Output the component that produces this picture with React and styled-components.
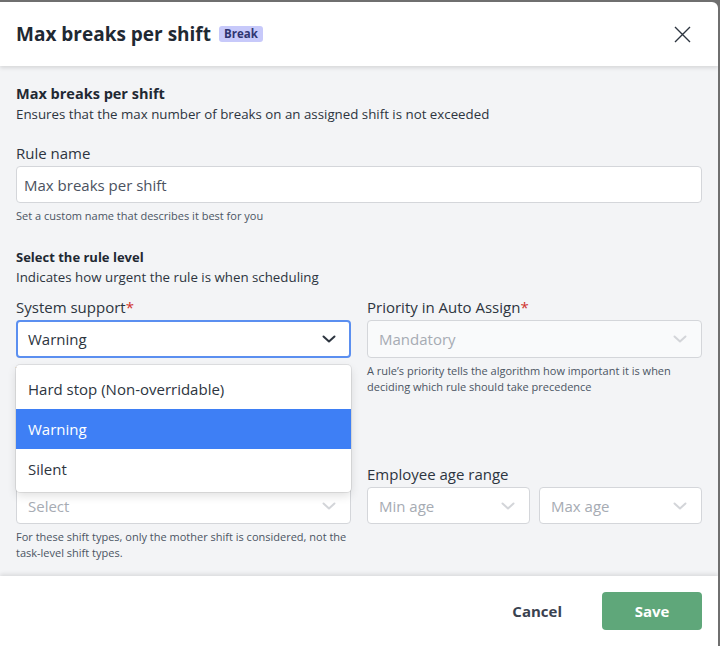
import React from 'react'
import styled, { createGlobalStyle } from 'styled-components'

const GlobalStyle = createGlobalStyle`
  html, body {
    margin: 0;
    padding: 0;
    background: #6f6f6f;
    font-family: "Open Sans", Lato, sans-serif;
    color: #1f2937;
    overflow: hidden;
  }
  * {
    box-sizing: border-box;
  }
`

const Modal = styled.div`
  margin-top: 2px;
  width: 718px;
  height: 644px;
  background: #fff;
  border-top-right-radius: 6px;
  display: flex;
  flex-direction: column;
  overflow: hidden;
`

const Header = styled.header`
  height: 64px;
  flex-shrink: 0;
  display: flex;
  align-items: center;
  padding: 0 27px 0 16px;
  position: relative;
  z-index: 2;
  box-shadow: 0 2px 4px rgba(0, 0, 0, 0.12);
`

const Title = styled.h1`
  margin: 0;
  font-size: 19px;
  font-weight: 700;
  color: #1f2933;
`

const Badge = styled.span`
  margin-left: 8px;
  background: #c7c9fa;
  color: #2f3571;
  font-size: 11.5px;
  font-weight: 700;
  padding: 1px 5px;
  border-radius: 3px;
  line-height: 14px;
`

const CloseButton = styled.button`
  margin-left: auto;
  border: none;
  background: none;
  padding: 0;
  display: flex;
  cursor: pointer;
`

const Body = styled.main`
  flex: 1;
  background: #f3f4f6;
  padding: 18px 16px 0;
  position: relative;
`

const Section = styled.div`
  margin-top: ${p => p.top}px;
`

const SectionTitle = styled.h2`
  margin: 0;
  font-size: ${p => (p.small ? '13px' : '14.5px')};
  line-height: 20px;
  font-weight: 700;
  color: #1f2933;
`

const Description = styled.p`
  margin: 1px 0 0;
  font-size: 13.3px;
  line-height: 18px;
  color: #2d3540;
`

const Label = styled.label`
  display: block;
  font-size: 15px;
  line-height: 22px;
  color: #2d3540;
  margin-bottom: 2px;
  span {
    color: #d0312d;
  }
`

const TextInput = styled.input`
  width: 100%;
  height: 37px;
  border: 1px solid #d4d6da;
  border-radius: 4px;
  background: #fff;
  padding: 0 7px;
  font-family: inherit;
  font-size: 15px;
  color: #4b5260;
  outline: none;
`

const Helper = styled.p`
  margin: 5px 0 0;
  font-size: 11px;
  line-height: 16px;
  color: #4b5563;
`

const Grid = styled.div`
  display: grid;
  grid-template-columns: 1fr 1fr;
  column-gap: 16px;
  margin-top: ${p => p.top}px;
`

const Field = styled.div`
  position: relative;
`

const Pair = styled.div`
  display: grid;
  grid-template-columns: 1fr 1fr;
  column-gap: 9px;
`

const SelectBox = styled.div`
  height: ${p => (p.tall ? 38 : 37)}px;
  border: ${p => (p.focused ? '2px solid #5b8ff0' : '1px solid #d4d6da')};
  border-radius: 4px;
  background: ${p => (p.disabled ? '#f9fafb' : '#fff')};
  display: flex;
  align-items: center;
  padding: 0 ${p => (p.focused ? 13 : 14)}px 0 ${p => (p.focused ? 10 : 11)}px;
  font-size: 15px;
  color: ${p => (p.muted ? '#a6abb3' : '#2d3540')};
  svg {
    margin-left: auto;
  }
`

const Menu = styled.ul`
  position: absolute;
  left: 0;
  right: 0;
  top: 69px;
  margin: 0;
  padding: 4px 0 3px;
  list-style: none;
  background: #fff;
  border-radius: 4px;
  box-shadow: 0 0 0 1px rgba(0, 0, 0, 0.08), 0 4px 10px rgba(0, 0, 0, 0.12);
  z-index: 5;
`

const Option = styled.li`
  height: 40px;
  display: flex;
  align-items: center;
  padding: 0 12px;
  font-size: 15px;
  background: ${p => (p.selected ? '#3e7ff5' : 'transparent')};
  color: ${p => (p.selected ? '#fff' : '#2d3540')};
`

const Footer = styled.footer`
  height: 70px;
  flex-shrink: 0;
  display: flex;
  align-items: center;
  justify-content: flex-end;
  gap: 40px;
  padding: 0 16px;
  box-shadow: 0 -2px 4px rgba(0, 0, 0, 0.1);
  position: relative;
  z-index: 2;
`

const Button = styled.button`
  font-family: inherit;
  font-size: 15px;
  font-weight: 700;
  border: none;
  border-radius: 4px;
  height: 38px;
  width: ${p => (p.primary ? '100px' : 'auto')};
  background: ${p => (p.primary ? '#5fa77a' : 'transparent')};
  color: ${p => (p.primary ? '#fff' : '#3a4250')};
  padding: 0;
  cursor: pointer;
`

const Chevron = ({ color = '#374151' }) => (
  <svg width="14" height="8" viewBox="0 0 14 8" fill="none">
    <path d="M1.5 1.5 L7 6.5 L12.5 1.5" stroke={color} strokeWidth="2" strokeLinecap="round" strokeLinejoin="round" />
  </svg>
)

const CloseIcon = () => (
  <svg width="17" height="17" viewBox="0 0 17 17" fill="none">
    <path d="M1 1 L16 16 M16 1 L1 16" stroke="#2d3540" strokeWidth="1.4" />
  </svg>
)

const App = () => (
  <>
    <GlobalStyle />
    <Modal>
      <Header>
        <Title>Max breaks per shift</Title>
        <Badge>Break</Badge>
        <CloseButton aria-label="Close">
          <CloseIcon />
        </CloseButton>
      </Header>
      <Body>
        <SectionTitle>Max breaks per shift</SectionTitle>
        <Description>Ensures that the max number of breaks on an assigned shift is not exceeded</Description>

        <Section top={19}>
          <Label>Rule name</Label>
          <TextInput defaultValue="Max breaks per shift" />
          <Helper>Set a custom name that describes it best for you</Helper>
        </Section>

        <Section top={23}>
          <SectionTitle small>Select the rule level</SectionTitle>
          <Description>Indicates how urgent the rule is when scheduling</Description>
        </Section>

        <Grid top={10}>
          <Field>
            <Label>
              System support<span>*</span>
            </Label>
            <SelectBox focused tall>
              Warning
              <Chevron color="#2d3540" />
            </SelectBox>
            <Helper>
              The system support indicates how the rule is checked when scheduling and
              whether it can be overridden
            </Helper>
            <Menu>
              <Option>Hard stop (Non-overridable)</Option>
              <Option selected>Warning</Option>
              <Option>Silent</Option>
            </Menu>
          </Field>
          <Field>
            <Label>
              Priority in Auto Assign<span>*</span>
            </Label>
            <SelectBox disabled muted tall>
              Mandatory
              <Chevron color="#d3d5d9" />
            </SelectBox>
            <Helper>
              A rule’s priority tells the algorithm how important it is when deciding which
              rule should take precedence
            </Helper>
          </Field>
        </Grid>

        <Grid top={68}>
          <Field>
            <Label>&nbsp;</Label>
            <SelectBox muted>
              Select
              <Chevron color="#d3d5d9" />
            </SelectBox>
            <Helper>
              For these shift types, only the mother shift is considered, not the task-level
              shift types.
            </Helper>
          </Field>
          <Field>
            <Label>Employee age range</Label>
            <Pair>
              <SelectBox muted>
                Min age
                <Chevron color="#d3d5d9" />
              </SelectBox>
              <SelectBox muted>
                Max age
                <Chevron color="#d3d5d9" />
              </SelectBox>
            </Pair>
          </Field>
        </Grid>
      </Body>
      <Footer>
        <Button>Cancel</Button>
        <Button primary>Save</Button>
      </Footer>
    </Modal>
  </>
)

export default App
